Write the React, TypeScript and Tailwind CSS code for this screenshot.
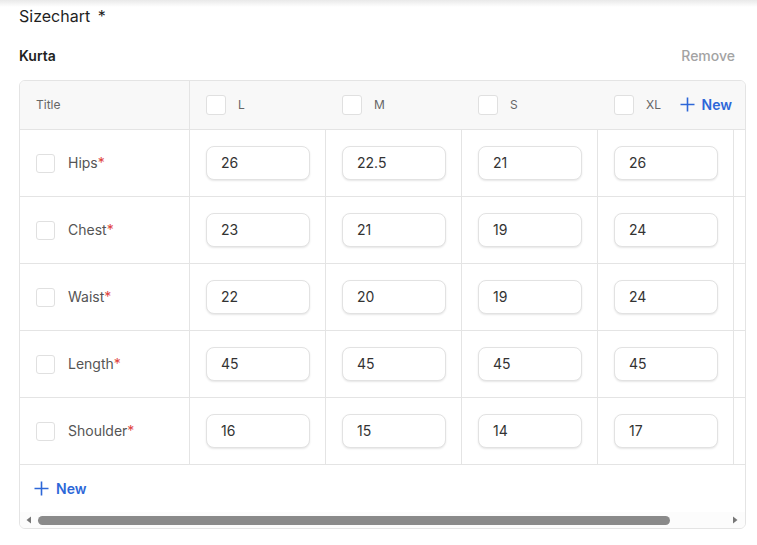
import React from "react";

const sizes = ["L", "M", "S", "XL"];

const rows: { name: string; values: string[] }[] = [
  { name: "Hips", values: ["26", "22.5", "21", "26"] },
  { name: "Chest", values: ["23", "21", "19", "24"] },
  { name: "Waist", values: ["22", "20", "19", "24"] },
  { name: "Length", values: ["45", "45", "45", "45"] },
  { name: "Shoulder", values: ["16", "15", "14", "17"] },
];

function PlusIcon() {
  return (
    <svg width="15" height="15" viewBox="0 0 15 15" fill="none" stroke="currentColor" strokeWidth="1.6">
      <path d="M7.5 0.5v14M0.5 7.5h14" />
    </svg>
  );
}

function Checkbox({ size = "w-[19px] h-[19px]" }: { size?: string }) {
  return <div className={`${size} shrink-0 rounded-[3px] border border-[#e0e0e0] bg-white`} />;
}

export default function App() {
  return (
    <div
      className="relative w-[757px] h-[545px] overflow-hidden bg-white"
      style={{ fontFamily: "Inter, 'Noto Sans', sans-serif" }}
    >
      {/* shadow cast by the sticky bar above */}
      <div className="absolute inset-x-0 top-0 h-[7px] bg-gradient-to-b from-[#e9e9e9] to-white" />

      <div className="relative pl-[19px] pt-[4px]">
        <div className="text-[16px] leading-6 text-[#1f1f1f]">
          Sizechart <span className="ml-[3px]">*</span>
        </div>

        <div className="mt-[15px] flex h-[24px] items-center justify-between pr-[22px]">
          <span className="text-[14px] font-semibold text-[#1f1f1f]">Kurta</span>
          <span className="text-[14px] font-medium text-[#a3a3a3]">Remove</span>
        </div>

        {/* size chart table */}
        <div className="relative mt-[13px] w-[727px] overflow-hidden rounded-[6px] border border-[#e4e4e4]">
          <div className="flex h-[49px] w-max border-b border-[#e4e4e4] bg-[#f8f8f8]">
            <div className="flex w-[170px] shrink-0 items-center border-r border-[#e4e4e4] pl-[16px] text-[12px] text-[#666]">
              Title
            </div>
            {sizes.map((s) => (
              <div key={s} className="flex w-[136px] shrink-0 items-center gap-[12px] pl-[16px]">
                <Checkbox size="w-[20px] h-[20px]" />
                <span className="text-[12px] text-[#666]">{s}</span>
              </div>
            ))}
            <div className="w-[80px] shrink-0" />
          </div>

          <button className="absolute right-[13px] top-[13px] flex items-center gap-[7px] bg-[#f8f8f8] text-[#2d67d8]">
            <PlusIcon />
            <span className="text-[14px] font-semibold">New</span>
          </button>

          {rows.map((r) => (
            <div key={r.name} className="flex h-[67px] w-max border-b border-[#e4e4e4]">
              <div className="flex w-[170px] shrink-0 items-center gap-[13px] border-r border-[#e4e4e4] pl-[16px]">
                <Checkbox />
                <span className="pb-[1px] text-[14px] text-[#555]">
                  {r.name}
                  <span className="text-[#e0443e]">*</span>
                </span>
              </div>
              {r.values.map((v, i) => (
                <div key={i} className="flex w-[136px] shrink-0 items-center border-r border-[#e4e4e4] pl-[16px]">
                  <div className="flex h-[34px] w-[104px] items-center rounded-[8px] border border-[#e2e2e2] bg-white px-[14px] pb-[1px] text-[14px] text-[#333] shadow-[0_1px_2px_rgba(0,0,0,0.1)]">
                    {v}
                  </div>
                </div>
              ))}
              <div className="w-[80px] shrink-0" />
            </div>
          ))}

          <div className="flex h-[47px] items-center gap-[7px] pl-[14px] text-[#2d67d8]">
            <PlusIcon />
            <span className="text-[14px] font-semibold">New</span>
          </div>

          {/* horizontal scrollbar */}
          <div className="flex h-[16px] items-center bg-[#fcfcfc] px-[4px]">
            <svg width="8" height="8" viewBox="0 0 8 8" className="ml-[1px] text-[#777]">
              <path d="M6 0.5v7L1.5 4z" fill="currentColor" />
            </svg>
            <div className="ml-[5px] h-[9px] w-[632px] rounded-full bg-[#8a8a8a]" />
            <div className="flex-1" />
            <svg width="8" height="8" viewBox="0 0 8 8" className="mr-[2px] text-[#777]">
              <path d="M2 0.5v7L6.5 4z" fill="currentColor" />
            </svg>
          </div>
        </div>
      </div>
    </div>
  );
}
